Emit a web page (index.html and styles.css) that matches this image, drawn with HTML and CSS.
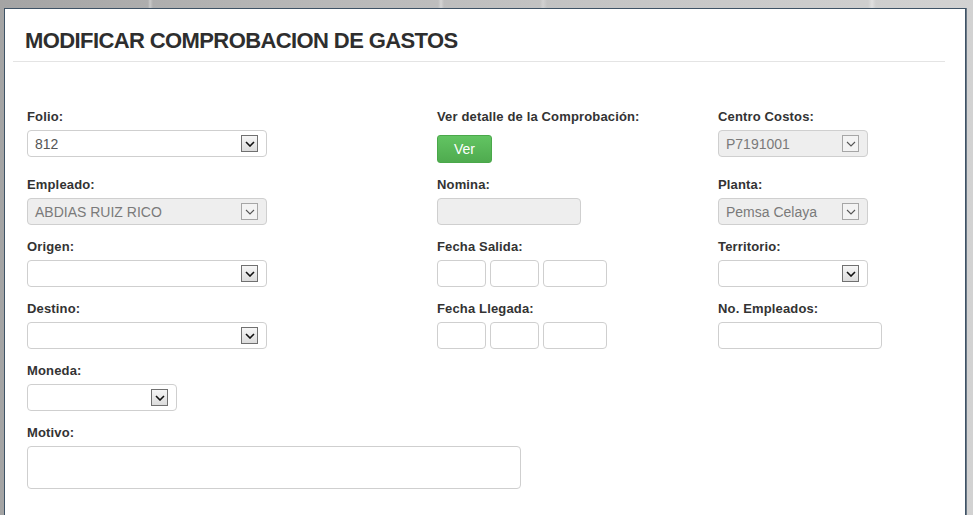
FILE: index.html
```html
<!DOCTYPE html>
<html lang="es">
<head>
<meta charset="utf-8">
<title>Modificar Comprobacion de Gastos</title>
<link rel="stylesheet" href="styles.css">
</head>
<body>
<div class="panel">
  <h1 class="title">MODIFICAR COMPROBACION DE GASTOS</h1>
  <hr class="rule">
  <form class="form">
    <div class="field">
      <label class="label">Folio:</label>
      <div class="select w240"><span class="value">812</span><span class="arrow"><svg width="10" height="6" viewBox="0 0 10 6"><path d="M1 1 L5 5 L9 1" fill="none" stroke="#111" stroke-width="1.6"/></svg></span></div>
    </div>
    <div class="field">
      <label class="label">Ver detalle de la Comprobación:</label>
      <button type="button" class="btn-ver">Ver</button>
    </div>
    <div class="field">
      <label class="label">Centro Costos:</label>
      <div class="select disabled w150"><span class="value">P7191001</span><span class="arrow"><svg width="10" height="6" viewBox="0 0 10 6"><path d="M1 1 L5 5 L9 1" fill="none" stroke="#555" stroke-width="1.1"/></svg></span></div>
    </div>

    <div class="field">
      <label class="label">Empleado:</label>
      <div class="select disabled w240"><span class="value">ABDIAS RUIZ RICO</span><span class="arrow"><svg width="10" height="6" viewBox="0 0 10 6"><path d="M1 1 L5 5 L9 1" fill="none" stroke="#555" stroke-width="1.1"/></svg></span></div>
    </div>
    <div class="field">
      <label class="label">Nomina:</label>
      <div class="input disabled w144"></div>
    </div>
    <div class="field">
      <label class="label">Planta:</label>
      <div class="select disabled w150"><span class="value">Pemsa Celaya</span><span class="arrow"><svg width="10" height="6" viewBox="0 0 10 6"><path d="M1 1 L5 5 L9 1" fill="none" stroke="#555" stroke-width="1.1"/></svg></span></div>
    </div>

    <div class="field">
      <label class="label">Origen:</label>
      <div class="select w240"><span class="value"></span><span class="arrow"><svg width="10" height="6" viewBox="0 0 10 6"><path d="M1 1 L5 5 L9 1" fill="none" stroke="#111" stroke-width="1.6"/></svg></span></div>
    </div>
    <div class="field">
      <label class="label">Fecha Salida:</label>
      <div class="dates"><div class="input w49"></div><div class="input w49"></div><div class="input w64"></div></div>
    </div>
    <div class="field">
      <label class="label">Territorio:</label>
      <div class="select w150"><span class="value"></span><span class="arrow"><svg width="10" height="6" viewBox="0 0 10 6"><path d="M1 1 L5 5 L9 1" fill="none" stroke="#111" stroke-width="1.6"/></svg></span></div>
    </div>

    <div class="field">
      <label class="label">Destino:</label>
      <div class="select w240"><span class="value"></span><span class="arrow"><svg width="10" height="6" viewBox="0 0 10 6"><path d="M1 1 L5 5 L9 1" fill="none" stroke="#111" stroke-width="1.6"/></svg></span></div>
    </div>
    <div class="field">
      <label class="label">Fecha Llegada:</label>
      <div class="dates"><div class="input w49"></div><div class="input w49"></div><div class="input w64"></div></div>
    </div>
    <div class="field">
      <label class="label">No. Empleados:</label>
      <div class="input w164"></div>
    </div>

    <div class="field">
      <label class="label">Moneda:</label>
      <div class="select w150"><span class="value"></span><span class="arrow"><svg width="10" height="6" viewBox="0 0 10 6"><path d="M1 1 L5 5 L9 1" fill="none" stroke="#111" stroke-width="1.6"/></svg></span></div>
    </div>
    <div class="field"></div>
    <div class="field"></div>

    <div class="field span2">
      <label class="label">Motivo:</label>
      <div class="textarea"></div>
    </div>
  </form>
</div>
</body>
</html>
```

FILE: styles.css
```css
html, body {
  margin: 0;
  height: 100%;
  overflow: hidden;
}
body {
  font-family: "Liberation Sans", Arial, sans-serif;
  background:
    linear-gradient(90deg,
      rgba(255,255,255,0) 0px, rgba(255,255,255,0) 148px, rgba(255,255,255,0.35) 150px, rgba(255,255,255,0) 153px,
      rgba(255,255,255,0) 438px, rgba(255,255,255,0.35) 441px, rgba(255,255,255,0) 444px,
      rgba(255,255,255,0) 540px, rgba(255,255,255,0.25) 543px, rgba(255,255,255,0) 547px,
      rgba(255,255,255,0) 868px, rgba(255,255,255,0.35) 872px, rgba(255,255,255,0) 876px),
    linear-gradient(90deg, #a4a4a4 0%, #b4b4b4 25%, #c2c2c2 55%, #cbcbcb 80%, #d2d2d2 100%);
}
.panel {
  box-sizing: border-box;
  margin: 8px 0 0 4px;
  width: 962px;
  height: calc(100vh - 8px);
  background: #fff;
  border: 1px solid #3f5366;
  border-bottom: 0;
  box-shadow: 1px 0 0 #6a7886;
  padding: 20px 20px 0 8px;
}
.title {
  margin: 0 0 0 12px;
  font-size: 22px;
  line-height: 24px;
  font-weight: bold;
  letter-spacing: -0.6px;
  color: #2e2e2e;
}
.rule {
  margin: 8px 0 0 0;
  border: 0;
  height: 1px;
  background: #e4e4e4;
}
.form {
  margin: 46px 0 0 14px;
  display: grid;
  grid-template-columns: 410px 281px 1fr;
  row-gap: 13px;
}
.field {
  display: flex;
  flex-direction: column;
  align-items: flex-start;
}
.span2 {
  grid-column: 1 / span 2;
}
.label {
  font-size: 13px;
  line-height: 18px;
  font-weight: bold;
  letter-spacing: 0.15px;
  color: #333;
  margin-bottom: 4px;
}
.select {
  box-sizing: border-box;
  height: 27px;
  display: flex;
  align-items: center;
  border: 1px solid #cfcfcf;
  border-radius: 4px;
  background: #fff;
  padding: 0 8px 0 7px;
  font-size: 14px;
  color: #555;
}
.select .value {
  flex: 1;
}
.select .arrow {
  box-sizing: border-box;
  width: 17px;
  height: 17px;
  border: 1px solid #707070;
  background: linear-gradient(#f6f6f6, #dcdcdc);
  display: flex;
  align-items: center;
  justify-content: center;
}
.select.disabled {
  background: #eeeeee;
  color: #7a7a7a;
}
.select.disabled .arrow {
  border-color: #a6a6a6;
  background: #f3f3f3;
}
.input {
  box-sizing: border-box;
  height: 27px;
  border: 1px solid #cfcfcf;
  border-radius: 4px;
  background: #fff;
}
.input.disabled {
  background: #eeeeee;
}
.dates {
  display: flex;
  gap: 4px;
}
.textarea {
  box-sizing: border-box;
  width: 494px;
  height: 43px;
  border: 1px solid #cfcfcf;
  border-radius: 4px;
  background: #fff;
}
.btn-ver {
  margin-top: 5px;
  box-sizing: border-box;
  width: 55px;
  height: 28px;
  border: 1px solid #4aa84a;
  border-radius: 3px;
  background: linear-gradient(#62c462, #4fab4f);
  color: #fff;
  font-family: "Liberation Sans", Arial, sans-serif;
  font-size: 14px;
  padding: 0;
}
.w240 { width: 240px; }
.w150 { width: 150px; }
.w144 { width: 144px; }
.w164 { width: 164px; }
.w49 { width: 49px; }
.w64 { width: 64px; }
```
